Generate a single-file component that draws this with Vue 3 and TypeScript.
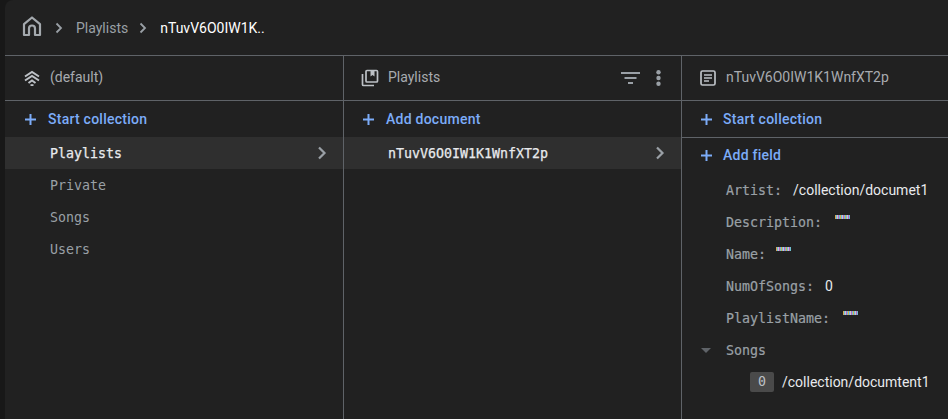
<script setup lang="ts">
interface Field {
  key: string
  value?: string
  blankGap?: number
}

const collections = ['Playlists', 'Private', 'Songs', 'Users']

const fields: Field[] = [
  { key: 'Artist', value: '/collection/documet1' },
  { key: 'Description', blankGap: 13 },
  { key: 'Name', blankGap: 10 },
  { key: 'NumOfSongs', value: '0' },
  { key: 'PlaylistName', blankGap: 13 },
]
</script>

<template>
  <div class="page">
    <div class="card">
      <header class="crumbs">
        <svg class="home" width="24" height="24" viewBox="0 0 24 24" fill="none" stroke="#a4a9ae" stroke-width="2.200">
          <path d="M4 21V10.200L12 3.500l8 6.700V21h-5v-6.500a3 3 0 0 0-6 0V21z" stroke-linejoin="round" />
        </svg>
        <svg class="sep" width="10" height="12" viewBox="0 0 10 12" fill="none" stroke="#9aa0a6" stroke-width="1.800">
          <path d="M2.500 1.500 7 6l-4.500 4.500" />
        </svg>
        <span class="crumb">Playlists</span>
        <svg class="sep" width="10" height="12" viewBox="0 0 10 12" fill="none" stroke="#9aa0a6" stroke-width="1.800">
          <path d="M2.500 1.500 7 6l-4.500 4.500" />
        </svg>
        <span class="crumb current">nTuvV6O0IW1K..</span>
      </header>

      <div class="columns">
        <section class="col">
          <div class="col-head">
            <svg class="head-icon" width="16" height="16" viewBox="0 0 16 16" fill="none" stroke="#bdc1c6" stroke-width="2">
              <path d="M1 6.500 8 2l7 4.500" />
              <path d="M1 10.500 8 6l7 4.500" />
              <path d="M4.500 13 8 10.500l3.500 2.500" />
              <path d="M6.500 15.200h3" />
            </svg>
            <span class="head-text">(default)</span>
          </div>
          <button class="action">
            <svg class="plus" width="11" height="11" viewBox="0 0 11 11" fill="#7cacf8">
              <path d="M4.500 0h2v4.500H11v2H6.500V11h-2V6.500H0v-2h4.500z" />
            </svg>
            <span>Start collection</span>
          </button>
          <ul class="list">
            <li v-for="(name, i) in collections" :key="name" class="row" :class="{ active: i === 0 }">
              <span>{{ name }}</span>
              <svg v-if="i === 0" width="12" height="14" viewBox="0 0 12 14" fill="none" stroke="#9aa0a6" stroke-width="2.200">
                <path d="M3 1.500 8.500 7 3 12.500" />
              </svg>
            </li>
          </ul>
        </section>

        <section class="col">
          <div class="col-head">
            <svg class="head-icon" width="18" height="18" viewBox="0 0 18 18" fill="none" stroke="#bdc1c6" stroke-width="1.700">
              <rect x="5" y="1.500" width="11.500" height="11.500" rx="1" />
              <path d="M1.500 5v10.500a1 1 0 0 0 1 1H13" />
              <path d="M9.500 1.500h4v6l-2-1.500-2 1.500z" fill="#bdc1c6" stroke="none" />
            </svg>
            <span class="head-text">Playlists</span>
            <svg class="filter" width="19" height="12" viewBox="0 0 19 12" fill="#9aa0a6">
              <rect x="0" y="0" width="19" height="2" />
              <rect x="3.500" y="5" width="12" height="2" />
              <rect x="7" y="10" width="5" height="2" />
            </svg>
            <svg class="more" width="5" height="16" viewBox="0 0 5 16" fill="#9aa0a6">
              <circle cx="2.500" cy="2.200" r="2.200" />
              <circle cx="2.500" cy="8" r="2.200" />
              <circle cx="2.500" cy="13.800" r="2.200" />
            </svg>
          </div>
          <button class="action">
            <svg class="plus" width="11" height="11" viewBox="0 0 11 11" fill="#7cacf8">
              <path d="M4.500 0h2v4.500H11v2H6.500V11h-2V6.500H0v-2h4.500z" />
            </svg>
            <span>Add document</span>
          </button>
          <ul class="list">
            <li class="row active">
              <span>nTuvV6O0IW1K1WnfXT2p</span>
              <svg width="12" height="14" viewBox="0 0 12 14" fill="none" stroke="#9aa0a6" stroke-width="2.200">
                <path d="M3 1.500 8.500 7 3 12.500" />
              </svg>
            </li>
          </ul>
        </section>

        <section class="col">
          <div class="col-head">
            <svg class="head-icon" width="16" height="16" viewBox="0 0 16 16" fill="none" stroke="#bdc1c6" stroke-width="1.700">
              <rect x="1" y="1" width="14" height="14" rx="1.500" />
              <path d="M4 5h8M4 8h8M4 11h5" />
            </svg>
            <span class="head-text">nTuvV6O0IW1K1WnfXT2p</span>
          </div>
          <button class="action lined">
            <svg class="plus" width="11" height="11" viewBox="0 0 11 11" fill="#7cacf8">
              <path d="M4.500 0h2v4.500H11v2H6.500V11h-2V6.500H0v-2h4.500z" />
            </svg>
            <span>Start collection</span>
          </button>
          <button class="action short">
            <svg class="plus" width="11" height="11" viewBox="0 0 11 11" fill="#7cacf8">
              <path d="M4.500 0h2v4.500H11v2H6.500V11h-2V6.500H0v-2h4.500z" />
            </svg>
            <span>Add field</span>
          </button>
          <div class="fields">
            <div v-for="f in fields" :key="f.key" class="field">
              <span class="key">{{ f.key }}:</span>
              <span v-if="f.blankGap" class="blank" :style="{ marginLeft: f.blankGap + 'px' }"></span>
              <span v-else class="val">{{ f.value }}</span>
            </div>
            <div class="field songs">
              <span class="caret"></span>
              <span class="key">Songs</span>
            </div>
            <div class="field item">
              <span class="index">0</span>
              <span class="val">/collection/documtent1</span>
            </div>
          </div>
        </section>
      </div>
    </div>
  </div>
</template>

<style>
html, body { margin: 0; background: #181818; }
</style>

<style scoped>
.page {
  width: 948px;
  height: 419px;
  overflow: hidden;
  padding-left: 5px;
  box-sizing: border-box;
  background: #181818;
  font-family: Roboto, "Liberation Sans", sans-serif;
  font-size: 14px;
}
.card {
  height: 100%;
  background: #212121;
  border-top-left-radius: 8px;
  display: flex;
  flex-direction: column;
}
.crumbs {
  height: 55px;
  flex: none;
  display: flex;
  align-items: center;
  padding-left: 15px;
  border-bottom: 1px solid #5f6368;
  color: #9aa0a6;
}
.home { margin-right: 10px; margin-bottom: 4px; }
.sep { margin-right: 12px; }
.crumb { margin-right: 10px; }
.crumb.current { color: #fff; }
.columns {
  flex: 1;
  display: grid;
  grid-template-columns: 339px 338px 1fr;
  min-height: 0;
}
.col {
  border-right: 1px solid #5f6368;
  min-width: 0;
}
.col:last-child { border-right: 0; }
.col-head {
  height: 44px;
  display: flex;
  align-items: center;
  padding-left: 18px;
  border-bottom: 1px solid #5f6368;
  color: #a8abb0;
}
.col:nth-child(1) .col-head { padding-left: 19px; }
.col:nth-child(2) .col-head { padding-left: 17px; }
.head-icon { margin-right: 10px; flex: none; }
.col:nth-child(2) .head-icon { margin-right: 9px; }
.head-text { margin-bottom: 2px; }
.filter { margin-left: auto; margin-right: 16px; }
.more { margin-right: 20px; }
.action {
  display: flex;
  align-items: center;
  width: 100%;
  height: 36px;
  padding: 0 0 0 19px;
  border: 0;
  background: none;
  color: #7cacf8;
  font: 500 14px Roboto, "Liberation Sans", sans-serif;
  letter-spacing: 0.25px;
  box-sizing: border-box;
}
.col:nth-child(1) .action { padding-left: 20px; }
.action.lined { border-bottom: 1px solid #5f6368; height: 37px; }
.action.short { height: 34px; }
.plus { margin-right: 12px; flex: none; }
.col:nth-child(3) .plus { margin-right: 11px; }
.list {
  list-style: none;
  margin: 0;
  padding: 0;
}
.row {
  height: 32px;
  display: flex;
  align-items: center;
  justify-content: space-between;
  padding: 0 15px 0 45px;
  font: 13.3px "DejaVu Sans Mono", monospace;
  color: #9aa0a6;
}
.col:nth-child(2) .row { padding-left: 44px; }
.row.active {
  background: #2f2f2f;
  color: #e8eaed;
  -webkit-text-stroke: 0.25px;
}
.fields { padding-top: 2px; }
.field {
  height: 32px;
  display: flex;
  align-items: center;
  padding-left: 44px;
}
.key {
  font: 13.3px "DejaVu Sans Mono", monospace;
  color: #9aa0a6;
  -webkit-text-stroke: 0.2px;
}
.val {
  color: #e8eaed;
  margin-left: 11px;
}
.item .val { margin-left: 8px; }
.blank {
  width: 15px;
  height: 4px;
  align-self: flex-start;
  margin-top: 9px;
  background: repeating-linear-gradient(90deg, #d9a94a 0 1px, #6db9e0 1px 2px, #c9c9c9 2px 3px, #b765c8 3px 4px, #6fc0cf 4px 5px);
}
.songs { position: relative; }
.caret {
  position: absolute;
  left: 19px;
  top: 14px;
  border-left: 5px solid transparent;
  border-right: 5px solid transparent;
  border-top: 5px solid #5f6368;
}
.item { padding-left: 68px; }
.index {
  width: 24px;
  height: 20px;
  border-radius: 2px;
  background: #4a4a4a;
  color: #bdc1c6;
  font: 13.3px/20px "DejaVu Sans Mono", monospace;
  text-align: center;
}
</style>
